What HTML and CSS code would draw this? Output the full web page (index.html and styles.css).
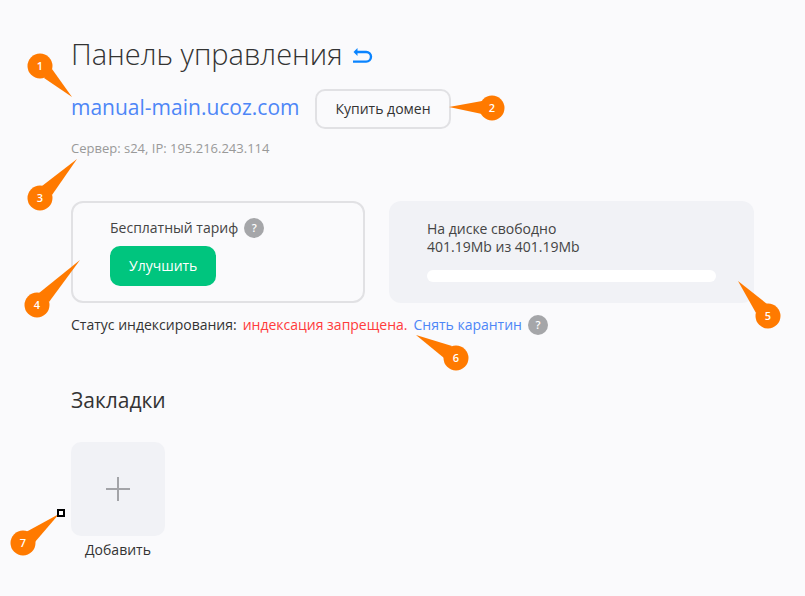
FILE: index.html
```html
<!DOCTYPE html>
<html lang="ru">
<head>
    <meta charset="UTF-8">
    <meta name="viewport" content="width=device-width, initial-scale=1.0">
    <title>Панель управления</title>
    <link rel="stylesheet" href="styles.css">
</head>
<body>
    <main class="page">
        <header class="title-row">
            <h1>Панель управления</h1>
            <a href="#" class="back-link" aria-label="Назад">
                <svg width="20" height="20" viewBox="0 0 20 20" fill="none" stroke="#0a84ff" stroke-width="2.400">
                    <path d="M2 8H13.200A4.800 4.800 0 0 1 13.200 17.600H0"/>
                    <path d="M4.500 4L0.500 8L4.500 12Z" fill="#0a84ff" stroke="none"/>
                </svg>
            </a>
        </header>

        <div class="domain-row">
            <a href="#" class="domain">manual-main.ucoz.com</a>
            <button type="button" class="btn btn-outline">Купить домен</button>
        </div>
        <p class="server">Сервер: s24, IP: 195.216.243.114</p>

        <div class="cards">
            <section class="card card-plan">
                <div class="plan-name">
                    <span>Бесплатный тариф</span>
                    <button type="button" class="help">?</button>
                </div>
                <button type="button" class="btn btn-green">Улучшить</button>
            </section>
            <section class="card card-disk">
                <p>На диске свободно</p>
                <p>401.19Mb из 401.19Mb</p>
                <div class="disk-bar"></div>
            </section>
        </div>

        <div class="status">
            <span>Статус индексирования:</span>
            <span class="denied">индексация запрещена.</span>
            <a href="#">Снять карантин</a>
            <button type="button" class="help">?</button>
        </div>

        <h2>Закладки</h2>
        <button type="button" class="bookmark">
            <span class="bookmark-tile">
                <svg width="26" height="26" viewBox="0 0 26 26" stroke="#a3a4a8" stroke-width="2">
                    <path d="M13 1V25M1 13H25"/>
                </svg>
            </span>
            <span>Добавить</span>
        </button>
    </main>

    <!-- numbered callouts over the page -->
    <svg class="callouts" width="805" height="596" viewBox="0 0 805 596">
        <g class="pin">
            <path d="M72 97L44 78L52 69Z"/>
            <circle cx="40" cy="66" r="12.500"/>
            <text x="40" y="70">1</text>
        </g>
        <g class="pin">
            <path d="M449 107L482 101V114Z"/>
            <circle cx="492" cy="108" r="12.500"/>
            <text x="492" y="112">2</text>
        </g>
        <g class="pin">
            <path d="M77 159L42 186L52 195Z"/>
            <circle cx="40" cy="198" r="12.500"/>
            <text x="40" y="202">3</text>
        </g>
        <g class="pin">
            <path d="M80 260L39 293L49 302Z"/>
            <circle cx="37" cy="305" r="12.500"/>
            <text x="37" y="309">4</text>
        </g>
        <g class="pin">
            <path d="M738 281L756 313L767 304Z"/>
            <circle cx="768" cy="316" r="12.500"/>
            <text x="768" y="320">5</text>
        </g>
        <g class="pin">
            <path d="M416 335L444 358L452 346Z"/>
            <circle cx="456" cy="358" r="12.500"/>
            <text x="456" y="362">6</text>
        </g>
        <g class="pin">
            <path d="M59 514L26 532L35 542Z"/>
            <circle cx="23" cy="543" r="12.500"/>
            <text x="23" y="547">7</text>
        </g>
        <rect class="handle" x="58" y="510" width="6" height="6"/>
    </svg>
</body>
</html>
```
FILE: styles.css
```css
* {
    box-sizing: border-box;
}
body {
    margin: 0;
    background: #fafafc;
    color: #333;
    font-family: "Open Sans", "Noto Sans", sans-serif;
    font-size: 14px;
    line-height: 18px;
}
h1, h2, p {
    margin: 0;
    font-weight: 300;
}
a {
    color: #4d86f7;
    text-decoration: none;
}
button {
    font: inherit;
    color: inherit;
    border: none;
    cursor: pointer;
}
.page {
    padding: 34px 51px 34px 71px;
}
.title-row {
    display: flex;
    align-items: center;
    gap: 10px;
}
h1 {
    font-size: 29px;
    line-height: 40px;
}
.back-link {
    display: flex;
}
.domain-row {
    display: flex;
    align-items: center;
    gap: 16px;
    margin-top: 15px;
}
.domain {
    padding-bottom: 4px;
    font-size: 21px;
    line-height: 32px;
}
.btn {
    height: 40px;
    padding: 0 18px;
    border-radius: 10px;
}
.btn-outline {
    background: none;
    border: 2px solid #e1e1e4;
}
.btn-green {
    padding: 0 19px;
    background: #00c57e;
    color: #fff;
    font-weight: 500;
}
.server {
    margin-top: 10px;
    color: #999;
    font-size: 13px;
    font-weight: 400;
}
.cards {
    display: grid;
    grid-template-columns: 294fr 365fr;
    gap: 24px;
    margin-top: 44px;
}
.card {
    min-height: 102px;
    border-radius: 12px;
    color: #444;
}
.card-plan {
    padding: 15px 37px 14px;
    border: 2px solid #e1e1e4;
}
.card-disk {
    padding: 19px 38px;
    background: #f1f2f6;
}
.card-disk p {
    font-weight: 400;
}
.plan-name, .status {
    display: flex;
    align-items: center;
    gap: 6px;
}
.plan-name {
    margin-bottom: 8px;
}
.help {
    width: 20px;
    height: 20px;
    padding: 0;
    border-radius: 50%;
    background: #a5a6a9;
    color: #fff;
    font-size: 11px;
    font-weight: 600;
}
.disk-bar {
    height: 12px;
    margin-top: 14px;
    border-radius: 6px;
    background: #fff;
}
.status {
    margin-top: 12px;
}
.denied {
    color: #ff3b3b;
}
h2 {
    margin-top: 50px;
    font-size: 21px;
    line-height: 30px;
    font-weight: 400;
}
.bookmark {
    display: block;
    width: 94px;
    margin-top: 27px;
    padding: 0;
    background: none;
}
.bookmark-tile {
    display: flex;
    align-items: center;
    justify-content: center;
    height: 94px;
    margin-bottom: 5px;
    border-radius: 10px;
    background: #f1f2f6;
}
.callouts {
    position: absolute;
    top: 0;
    left: 0;
    pointer-events: none;
}
.pin {
    fill: #ff7a00;
}
.pin text {
    fill: #fff;
    font-size: 11px;
    font-weight: 600;
    text-anchor: middle;
}
.handle {
    fill: #fff;
    stroke: #000;
    stroke-width: 2px;
}
```
